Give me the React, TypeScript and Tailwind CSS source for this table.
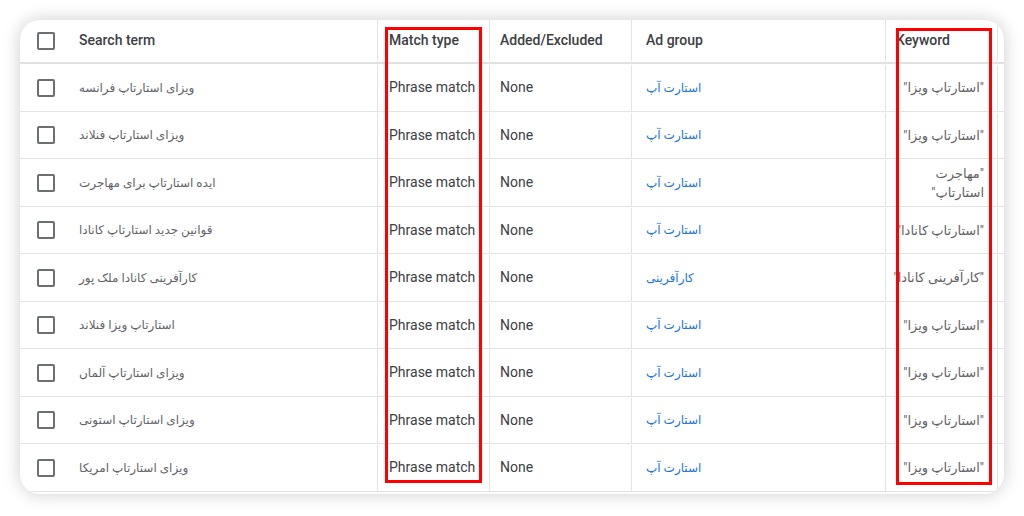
const ROWS = [
  { term: "ویزای استارتاپ فرانسه", group: "استارت آپ", keyword: ["\"استارتاپ ویزا\""] },
  { term: "ویزای استارتاپ فنلاند", group: "استارت آپ", keyword: ["\"استارتاپ ویزا\""] },
  { term: "ایده استارتاپ برای مهاجرت", group: "استارت آپ", keyword: ["\"مهاجرت", "استارتاپ\""] },
  { term: "قوانین جدید استارتاپ کانادا", group: "استارت آپ", keyword: ["\"استارتاپ کانادا\""] },
  { term: "کارآفرینی کانادا ملک پور", group: "کارآفرینی", keyword: ["\"کارآفرینی کانادا\""] },
  { term: "استارتاپ ویزا فنلاند", group: "استارت آپ", keyword: ["\"استارتاپ ویزا\""] },
  { term: "ویزای استارتاپ آلمان", group: "استارت آپ", keyword: ["\"استارتاپ ویزا\""] },
  { term: "ویزای استارتاپ استونی", group: "استارت آپ", keyword: ["\"استارتاپ ویزا\""] },
  { term: "ویزای استارتاپ امریکا", group: "استارت آپ", keyword: ["\"استارتاپ ویزا\""] },
];

function Checkbox() {
  return <span className="block h-[18px] w-[18px] rounded-[2px] border-2 border-[#6b6e72]" />;
}

function HeaderRow() {
  return (
    <div className="flex h-[44px] border-b-2 border-[#dfe1e5] pb-[1px] text-[14px] font-medium text-[#3c4043]">
      <div className="flex w-[59px] shrink-0 items-center pl-[17px]">
        <Checkbox />
      </div>
      <div className="flex w-[299px] shrink-0 items-center border-r border-[#e3e4e6]">Search term</div>
      <div className="flex w-[112px] shrink-0 items-center border-r border-[#e3e4e6] pl-[11px]">Match type</div>
      <div className="flex w-[142px] shrink-0 items-center border-r border-[#e3e4e6] pl-[10px]">Added/Excluded</div>
      <div className="flex w-[254px] shrink-0 items-center border-r border-[#e3e4e6] pl-[14px]">Ad group</div>
      <div className="flex w-[112px] shrink-0 items-center border-r border-[#e3e4e6] pl-[10px]">Keyword</div>
    </div>
  );
}

function Row({ term, group, keyword }: { term: string; group: string; keyword: string[] }) {
  return (
    <div className="flex h-[47.5px] border-b border-[#e3e4e6] pt-[1px] text-[14px] text-[#3c4043]">
      <div className="flex w-[59px] shrink-0 items-center pl-[17px]">
        <Checkbox />
      </div>
      <div className="flex w-[299px] shrink-0 items-center border-r border-[#e3e4e6]">
        <span dir="rtl" className="text-[12px] text-[#5f6368]">{term}</span>
      </div>
      <div className="flex w-[112px] shrink-0 items-center border-r border-[#e3e4e6] pl-[11px]">Phrase match</div>
      <div className="flex w-[142px] shrink-0 items-center border-r border-[#e3e4e6] pl-[10px]">None</div>
      <div className="flex w-[254px] shrink-0 items-center border-r border-[#e3e4e6] pl-[14px]">
        <span dir="rtl" className="text-[12px] text-[#1a73e8]">{group}</span>
      </div>
      <div className="flex w-[112px] shrink-0 items-center justify-end border-r border-[#e3e4e6] pr-[13px]">
        <div dir="rtl" className="whitespace-nowrap text-right text-[13px] leading-[19px] text-[#5f6368]">
          {keyword.map((line) => (
            <div key={line}>{line}</div>
          ))}
        </div>
      </div>
    </div>
  );
}

export default function App() {
  return (
    <div className="relative h-[516px] w-[1024px] overflow-hidden bg-white font-['Roboto','DejaVu_Sans',sans-serif]">
      <div className="pl-[20px] pt-[20px]">
        <div className="h-[474px] w-[984px] overflow-hidden rounded-[20px] bg-white shadow-[0_0_18px_rgba(0,0,0,0.2)]">
          <HeaderRow />
          {ROWS.map((r) => (
            <Row key={r.term} {...r} />
          ))}
        </div>
      </div>

      {/* red highlight annotations */}
      <div className="absolute left-[385px] top-[27px] h-[456px] w-[97px] border-[3px] border-[#ff0000]" />
      <div className="absolute left-[896px] top-[28px] h-[457px] w-[96px] border-[3px] border-[#ff0000]" />
    </div>
  );
}
